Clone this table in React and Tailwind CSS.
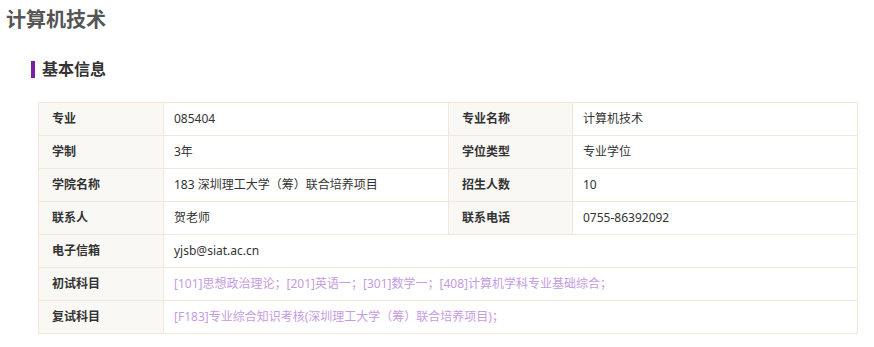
import React from "react";

const rows = [
  [["专业", "085404"], ["专业名称", "计算机技术"]],
  [["学制", "3年"], ["学位类型", "专业学位"]],
  [["学院名称", "183 深圳理工大学（筹）联合培养项目"], ["招生人数", "10"]],
  [["联系人", "贺老师"], ["联系电话", "0755-86392092"]],
];

const wide = [
  ["电子信箱", "yjsb@siat.ac.cn", false],
  ["初试科目", "[101]思想政治理论；[201]英语一；[301]数学一；[408]计算机学科专业基础综合；", true],
  ["复试科目", "[F183]专业综合知识考核(深圳理工大学（筹）联合培养项目)；", true],
];

export default function App() {
  return (
    <div
      className="bg-white w-[874px] h-[347px] overflow-hidden"
      style={{ fontFamily: '"Noto Sans", "Noto Sans CJK SC", sans-serif' }}
    >
      <h1 className="pl-[6px] pt-[6px] text-[20px] leading-[28px] font-bold text-[#555]">计算机技术</h1>

      <div className="flex items-center mt-[24px] ml-[31px]">
        <span className="w-[4px] h-[17px] bg-[#7b1fa2]" />
        <h2 className="ml-[7px] text-[16px] leading-[22px] font-bold text-[#333]">基本信息</h2>
      </div>

      <table className="ml-[38px] mt-[22px] w-[819px] border-collapse table-fixed border border-[#f2dcc8] text-[12px] text-[#333]">
        <colgroup>
          <col className="w-[125px]" />
          <col className="w-[285px]" />
          <col className="w-[124px]" />
          <col className="w-[285px]" />
        </colgroup>
        <tbody>
          {rows.map((r, i) => (
            <tr key={i} className="h-[33px]">
              <th className="border border-[#f3e6da] bg-[#faf8f5] text-left font-bold pl-[13px]">{r[0][0]}</th>
              <td className="border border-[#f3e6da] pl-[10px]">{r[0][1]}</td>
              <th className="border border-[#f3e6da] bg-[#faf8f5] text-left font-bold pl-[13px]">{r[1][0]}</th>
              <td className="border border-[#f3e6da] pl-[10px]">{r[1][1]}</td>
            </tr>
          ))}
          {wide.map(([k, v, purple]) => (
            <tr key={k} className="h-[33px]">
              <th className="border border-[#f3e6da] bg-[#faf8f5] text-left font-bold pl-[13px]">{k}</th>
              <td colSpan={3} className={"border border-[#f3e6da] pl-[10px] " + (purple ? "text-[#c59be3]" : "")}>
                {v}
              </td>
            </tr>
          ))}
        </tbody>
      </table>
    </div>
  );
}
